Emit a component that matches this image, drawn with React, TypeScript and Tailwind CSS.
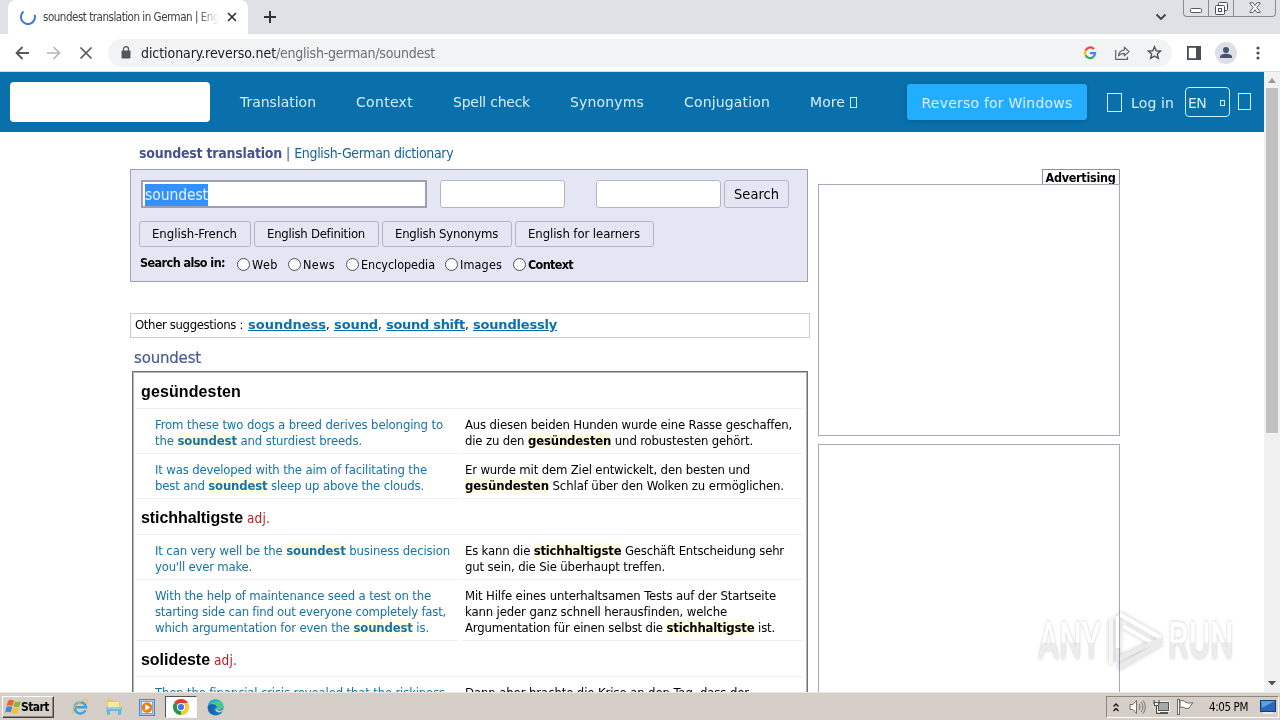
import { useLayoutEffect, useRef } from "react";
import type { ReactNode } from "react";

/* Spreads a single line of text over an exact width. */
function Fit({ w, className = "", children }: { w: number; className?: string; children: ReactNode }) {
  const ref = useRef<HTMLSpanElement>(null);
  useLayoutEffect(() => {
    const el = ref.current;
    if (!el) return;
    el.style.letterSpacing = "0px";
    const natural = el.getBoundingClientRect().width;
    const count = (el.textContent ?? "").length;
    el.style.letterSpacing = `${(w - natural) / count}px`;
  }, [w]);
  return (
    <span ref={ref} className={`inline-block shrink-0 whitespace-nowrap ${className}`}>
      {children}
    </span>
  );
}

function TabStrip() {
  return (
    <div className="flex h-[34px] bg-[#dee1e6] pl-2">
      <div className="mt-0 flex h-[34px] w-[240px] items-center rounded-t-lg bg-white pl-[12px]">
        <svg width="16" height="16" viewBox="0 0 16 16" fill="none" stroke="#3b78e0" strokeWidth="2">
          <path d="M3.500 2.600 A7 7 0 1 0 14.600 5.800" />
        </svg>
        <div className="ml-[7px] w-[176px] overflow-hidden text-[11.5px] leading-[16px] text-[#3c4043] [mask-image:linear-gradient(to_right,black_88%,transparent)]">
          <Fit w={176}>soundest translation in German | Eng</Fit>
        </div>
        <svg className="ml-[8px]" width="10" height="10" viewBox="0 0 10 10" stroke="#303438" strokeWidth="1.7">
          <path d="M1 1l8 8M9 1l-8 8" />
        </svg>
      </div>
      <svg className="mt-[10px] ml-[15px]" width="14" height="14" viewBox="0 0 14 14" stroke="#303438" strokeWidth="2">
        <path d="M7 1v12M1 7h12" />
      </svg>
      <div className="flex-1" />
      <svg className="mt-[13px] mr-[16px]" width="12" height="8" viewBox="0 0 12 8" fill="none" stroke="#3c4043" strokeWidth="1.8">
        <path d="M1.5 1.5L6 6l4.500-4.500" />
      </svg>
      <div className="mr-[4px] flex h-[17px] w-[93px] rounded-b-[4px] border border-t-0 border-[#868a94]">
        <div className="flex w-[25px] justify-center border-r border-[#868a94] pt-[8px]">
          <svg width="12" height="5" viewBox="0 0 12 5" fill="#fff" stroke="#555964">
            <rect x="0.500" y="0.500" width="11" height="4" rx="1" />
          </svg>
        </div>
        <div className="flex w-[25px] justify-center border-r border-[#868a94] pt-[2px]">
          <svg width="13" height="13" viewBox="0 0 13 13" fill="#f7f8fa" stroke="#4b4f5a">
            <rect x="3.500" y="0.500" width="9" height="8" rx="1" />
            <rect x="0.500" y="3.500" width="9" height="9" rx="1" />
            <rect x="3.500" y="6.500" width="3" height="3" />
          </svg>
        </div>
        <div className="flex flex-1 justify-center pt-[2px]">
          <svg width="12" height="12" viewBox="0 0 12 12">
            <path d="M1 .7h3l2 2.800L8 .7h3v1L7.800 5.500 11 9.500v1H8L6 7.800 4 10.500H1v-1l3.200-4L1 1.700z" fill="#f7f8fa" stroke="#4b4f5a" strokeWidth="0.900" />
          </svg>
        </div>
      </div>
    </div>
  );
}

function Toolbar() {
  return (
    <div className="flex h-[38px] items-center border-b border-[#d8daec] bg-white pl-[15px]">
      <svg width="14" height="14" viewBox="0 0 14 14" fill="none" stroke="#54585d" strokeWidth="1.800">
        <path d="M14 7H1.500M7.500 1L1.500 7l6 6" />
      </svg>
      <svg className="ml-[18px]" width="14" height="14" viewBox="0 0 14 14" fill="none" stroke="#b4b7ba" strokeWidth="1.600">
        <path d="M0 7h12.500M6.500 1l6 6-6 6" />
      </svg>
      <svg className="ml-[18px]" width="14" height="14" viewBox="0 0 14 14" stroke="#54585d" strokeWidth="1.700">
        <path d="M1.500 1.500l11 11M12.500 1.500l-11 11" />
      </svg>
      <div className="ml-[15px] flex h-[28px] w-[1064px] items-center rounded-full bg-[#f1f3f4] pl-[13px]">
        <svg width="10" height="13" viewBox="0 0 10 13">
          <rect x="0.500" y="4.500" width="9" height="8" rx="1" fill="#54585d" />
          <path d="M2.500 5V3.200a2.500 2.500 0 0 1 5 0V5" fill="none" stroke="#54585d" strokeWidth="1.300" />
        </svg>
        <div className="ml-[10px] flex text-[14px] leading-[18px]">
          <Fit w={135} className="text-[#202124]">dictionary.reverso.net</Fit>
          <Fit w={159} className="text-[#6b6f74]">/english-german/soundest</Fit>
        </div>
        <div className="flex-1" />
        <svg width="14" height="14" viewBox="0 0 14 14" fill="none" strokeWidth="2.200">
          <path d="M11 3A5 5 0 0 0 2.600 4.700" stroke="#ea4335" />
          <path d="M2.600 4.700a5 5 0 0 0 0 4.600" stroke="#fbbc05" />
          <path d="M2.600 9.300A5 5 0 0 0 10.500 10.700" stroke="#34a853" />
          <path d="M7 7.200h5a5 5 0 0 1-1.600 3.500" stroke="#4285f4" />
        </svg>
        <svg className="ml-[18px]" width="15" height="14" viewBox="0 0 15 14" fill="none" stroke="#5f6368" strokeWidth="1.200">
          <path d="M.700 4v9.300H12.500v-2.500" />
          <path d="M3.500 9.800C4 6 6 4.200 9.300 4.100V1.200L14 5.600l-4.700 4.200V7.300C6.800 7.200 5 8 3.500 9.800z" strokeLinejoin="round" />
        </svg>
        <svg className="mr-[10px] ml-[17px]" width="15" height="15" viewBox="0 0 16 16" fill="none" stroke="#4f5358" strokeWidth="1.500" strokeLinejoin="miter">
          <path d="M8 1.800l1.900 4.300 4.600.4-3.500 3.100 1.100 4.600L8 11.800l-4.100 2.400L5 9.600 1.500 6.500l4.600-.4z" />
        </svg>
      </div>
      <svg className="ml-[15px]" width="14" height="14" viewBox="0 0 14 14">
        <rect x="0.900" y="0.900" width="12.200" height="12.200" fill="none" stroke="#4a4e53" strokeWidth="1.800" />
        <path d="M9 0h5v14H9z" fill="#4a4e53" />
      </svg>
      <svg className="ml-[14px]" width="22" height="22" viewBox="0 0 22 22">
        <circle cx="11" cy="11" r="11" fill="#dcdfe4" />
        <circle cx="11" cy="8" r="3" fill="#4a5472" />
        <path d="M5 16v-1.200c0-2 3-3 6-3s6 1 6 3V16z" fill="#4a5472" />
      </svg>
      <svg className="ml-[19px]" width="4" height="14" viewBox="0 0 4 14" fill="#4a4e53">
        <circle cx="2" cy="2" r="1.600" />
        <circle cx="2" cy="7" r="1.600" />
        <circle cx="2" cy="12" r="1.600" />
      </svg>
    </div>
  );
}

const NAV: [string, number][] = [
  ["Translation", 76],
  ["Context", 57],
  ["Spell check", 77],
  ["Synonyms", 74],
  ["Conjugation", 86],
  ["More", 35],
];

function SiteHeader() {
  return (
    <header className="flex h-[60px] items-center bg-[#0970ac] pl-[10px] font-['DejaVu_Sans',sans-serif] text-[14px] leading-[20px] text-[#d6edf8]">
      <div className="h-[40px] w-[200px] rounded-[4px] bg-white" />
      <nav className="ml-[30px] flex gap-[40px]">
        {NAV.map(([label, w]) => (
          <Fit key={label} w={w}>{label}</Fit>
        ))}
      </nav>
      <div className="ml-[5px] h-[11px] w-[7px] border border-[#cfeafa]" />
      <div className="ml-[50px] flex h-[36px] w-[180px] items-center justify-center rounded-[3px] bg-[#22adff] pt-[2px] text-[#d8f1ff] shadow-[0_1px_4px_#075b8d]">
        <Fit w={151}>Reverso for Windows</Fit>
      </div>
      <div className="ml-[20px] h-[19px] w-[15px] border border-[#cdebf8]" />
      <Fit w={43} className="ml-[9px] pt-[2px]">Log in</Fit>
      <div className="ml-[11px] flex h-[30px] w-[45px] items-center justify-between rounded-[4px] border border-[#cdf1fb] pr-[4px] pl-[2px]">
        <Fit w={18} className="pt-[2px] text-[14px]">EN</Fit>
        <div className="mt-[2px] h-[6px] w-[5px] border border-[#cdf1fb]" />
      </div>
      <div className="mb-[2px] ml-[8px] h-[17px] w-[13px] border border-[#cdf1fb]" />
    </header>
  );
}

const QUICK: [string, string, number][] = [
  ["English-French", "w-[112px]", 85],
  ["English Definition", "w-[125px]", 98],
  ["English Synonyms", "w-[130px]", 103],
  ["English for learners", "w-[139px]", 112],
];

const SCOPES: [string, number, string][] = [
  ["Web", 26, "mr-[10px]"],
  ["News", 32, "mr-[11px]"],
  ["Encyclopedia", 74, "mr-[10px]"],
  ["Images", 42, "mr-[11px]"],
  ["Context", 45, "font-bold"],
];

function SearchPanel() {
  return (
    <section className="mt-[6px] h-[113px] w-[678px] border border-[#9fa2b3] bg-[#e4e6f3] pt-[10px] pl-[8px] text-black">
      <div className="flex h-[28px] pl-[2px]">
        <div className="w-[286px] border-2 border-[#9b9fb0] bg-white pt-px pl-[2px]">
          <span className="inline-block h-[22px] bg-[#3390ff] text-[15.5px] leading-[22px] text-[#e6f2ff]">
            <Fit w={63}>soundest</Fit>
          </span>
        </div>
        <div className="ml-[13px] w-[125px] rounded-[3px] border border-[#b3b6c4] bg-white" />
        <div className="ml-[31px] w-[125px] rounded-[3px] border border-[#b3b6c4] bg-white" />
        <div className="ml-[3px] flex w-[65px] items-center justify-center rounded-[3px] border border-[#b3b6c4] pt-[2px] text-[14.5px]">
          <Fit w={45}>Search</Fit>
        </div>
      </div>
      <div className="mt-[13px] flex h-[26px] gap-[3px] text-[13px]">
        {QUICK.map(([label, width, w]) => (
          <div key={label} className={`flex ${width} items-center justify-center rounded-[3px] border border-[#b3b6c4] pr-px`}>
            <Fit w={w}>{label}</Fit>
          </div>
        ))}
      </div>
      <div className="mt-[8px] flex h-[18px] items-center text-[12.5px] leading-[16px]">
        <Fit w={85} className="mb-[2px] ml-px font-bold">Search also in:</Fit>
        <div className="ml-[12px] flex items-center">
          {SCOPES.map(([label, w, cls]) => (
            <div key={label} className={`flex items-center ${cls}`}>
              <span className="mr-[2px] size-[13px] rounded-full border border-[#4f5057] bg-white" />
              <Fit w={w} className="pt-px">{label}</Fit>
            </div>
          ))}
        </div>
      </div>
    </section>
  );
}

function Hit({ children }: { children: ReactNode }) {
  return <b className="bg-[#fffde3] font-bold">{children}</b>;
}

type Line = [number, ReactNode];

function ResultHead({ word, w, adj = false }: { word: string; w: number; adj?: boolean }) {
  return (
    <div className="mx-[2px] flex h-[35px] items-center border-b border-[#f0f0f4] pt-[2px] pl-[5px] font-['Liberation_Sans',sans-serif] text-[16px] leading-[20px] text-black">
      <Fit w={w} className="font-bold">{word}</Fit>
      {adj && <Fit w={23} className="mb-px ml-[4px] font-['DejaVu_Sans_Condensed','DejaVu_Sans',sans-serif] text-[13.5px] text-[#b22028]">adj.</Fit>}
    </div>
  );
}

function Pair({ en, de, height }: { en: Line[]; de: Line[]; height: string }) {
  return (
    <div className={`mx-[2px] flex gap-[3px] text-[13px] leading-[16px] ${height}`}>
      <div className="w-[323px] border-b border-[#f0f0f4] pt-[8px] pl-[19px] text-[#1673a6]">
        {en.map(([w, content], i) => (
          <div key={i} className="h-[16px]"><Fit w={w}>{content}</Fit></div>
        ))}
      </div>
      <div className="flex-1 border-b border-[#f0f0f4] pt-[8px] pl-[3px] text-black">
        {de.map(([w, content], i) => (
          <div key={i} className="h-[16px]"><Fit w={w}>{content}</Fit></div>
        ))}
      </div>
    </div>
  );
}

function Results() {
  return (
    <section className="mt-[3px] ml-[2px] h-[400px] w-[676px] border border-[#6f7175] p-px pt-[2px] shadow-[inset_0_0_0_1px_#b4b5b8]">
      <ResultHead word="gesündesten" w={100} />
      <Pair
        height="h-[45px]"
        en={[
          [288, "From these two dogs a breed derives belonging to"],
          [207, <>the <Hit>soundest</Hit> and sturdiest breeds.</>],
        ]}
        de={[
          [327, "Aus diesen beiden Hunden wurde eine Rasse geschaffen,"],
          [288, <>die zu den <Hit>gesündesten</Hit> und robustesten gehört.</>],
        ]}
      />
      <Pair
        height="h-[45px]"
        en={[
          [272, "It was developed with the aim of facilitating the"],
          [269, <>best and <Hit>soundest</Hit> sleep up above the clouds.</>],
        ]}
        de={[
          [285, "Er wurde mit dem Ziel entwickelt, den besten und"],
          [319, <><Hit>gesündesten</Hit> Schlaf über den Wolken zu ermöglichen.</>],
        ]}
      />
      <div className="h-px" />
      <ResultHead word="stichhaltigste" w={102} adj />
      <Pair
        height="h-[45px]"
        en={[
          [295, <>It can very well be the <Hit>soundest</Hit> business decision</>],
          [97, "you'll ever make."],
        ]}
        de={[
          [319, <>Es kann die <Hit>stichhaltigste</Hit> Geschäft Entscheidung sehr</>],
          [200, "gut sein, die Sie überhaupt treffen."],
        ]}
      />
      <Pair
        height="h-[61px]"
        en={[
          [276, "With the help of maintenance seed a test on the"],
          [291, "starting side can find out everyone completely fast,"],
          [274, <>which argumentation for even the <Hit>soundest</Hit> is.</>],
        ]}
        de={[
          [311, "Mit Hilfe eines unterhaltsamen Tests auf der Startseite"],
          [262, "kann jeder ganz schnell herausfinden, welche"],
          [310, <>Argumentation für einen selbst die <Hit>stichhaltigste</Hit> ist.</>],
        ]}
      />
      <div className="h-px" />
      <ResultHead word="solideste" w={69} adj />
      <Pair
        height="h-[45px]"
        en={[[290, "Then the financial crisis revealed that the riskiness"]]}
        de={[[284, "Dann aber brachte die Krise an den Tag, dass der"]]}
      />
    </section>
  );
}

const SUGGESTIONS: [string, number][] = [
  ["soundness", 78],
  ["sound", 44],
  ["sound shift", 79],
  ["soundlessly", 84],
];

function DictionaryColumn() {
  return (
    <div className="w-[680px] pt-[11px]">
      <h1 className="flex h-[20px] items-center pl-[9px] text-[14px] leading-[20px] text-[#465292]">
        <Fit w={143} className="font-bold">soundest translation</Fit>
        <span className="mr-[4px] ml-[4px]">|</span>
        <Fit w={159} className="text-[#17629b]">English-German dictionary</Fit>
      </h1>
      <SearchPanel />
      <div className="mt-[31px] flex h-[25px] items-center border border-[#c9cbe2] pb-px pl-[4px] text-[13px] leading-[16px] text-black">
        <Fit w={108}>Other suggestions :</Fit>
        <span className="w-[5px]" />
        {SUGGESTIONS.map(([label, w], i) => (
          <span key={label} className="flex">
            <Fit w={w} className="font-['DejaVu_Sans',sans-serif] font-bold text-[#0970ac] underline">{label}</Fit>
            {i < 3 && <span className="w-[8px]">,</span>}
          </span>
        ))}
      </div>
      <h2 className="mt-[10px] h-[20px] pl-[4px] font-['DejaVu_Sans',sans-serif] text-[15px] leading-[20px] text-[#465c94]">
        <Fit w={67} className="[-webkit-text-stroke:0.2px_#465c94]">soundest</Fit>
      </h2>
      <Results />
    </div>
  );
}

function Advertising() {
  return (
    <aside className="ml-[8px] flex w-[302px] flex-col pt-[37px]">
      <div className="flex h-[15px] w-[78px] items-center justify-center self-end border border-b-0 border-[#8d8f9c] pt-[2px] pr-px text-[12.5px] leading-[14px] font-bold text-black">
        <Fit w={70}>Advertising</Fit>
      </div>
      <div className="h-[252px] shrink-0 border border-[#a7a9b9]" />
      <div className="mt-[8px] h-[252px] shrink-0 border border-[#a7a9b9]" />
    </aside>
  );
}

function ScrollBar() {
  return (
    <div className="flex w-[16px] shrink-0 flex-col items-center bg-[#f1f1f1]">
      <svg className="mt-[6px]" width="8" height="5" viewBox="0 0 8 5" fill="#9b9b9b"><path d="M0 5l4-5 4 5z" /></svg>
      <div className="mt-[5px] h-[345px] w-[12px] bg-[#c1c1c1]" />
      <div className="flex-1" />
      <svg className="mb-[6px]" width="8" height="5" viewBox="0 0 8 5" fill="#505050"><path d="M0 0l4 4.500L8 0z" /></svg>
    </div>
  );
}

function Watermark() {
  const word = "origin-left text-[50px] leading-[50px] font-medium font-['Roboto',sans-serif] bg-linear-to-b from-white from-52% to-[#ececec] to-54% bg-clip-text text-transparent [filter:drop-shadow(0_0_2px_#c8c8c8)]";
  return (
    <div className="pointer-events-none absolute top-[608px] left-[1038px] flex h-[66px] w-[198px] items-center mix-blend-multiply">
      <div className="w-[68px]"><span className={`block w-max scale-x-[0.64] ${word}`}>ANY</span></div>
      <svg className="shrink-0 overflow-visible [filter:drop-shadow(0_0_2px_#c4c4c4)]" width="60" height="66" viewBox="0 0 60 66" fill="none">
        <path d="M5 11v45" stroke="#f7f7f7" strokeWidth="4" />
        <path d="M12 8v32M13 6l42 24" stroke="#fff" strokeWidth="4.500" />
        <path d="M17 18l33 19" stroke="#fff" strokeWidth="4" />
        <path d="M12 42v9l43-20M12 60l43-25" stroke="#ebebeb" strokeWidth="4.500" />
      </svg>
      <div className="ml-[2px] w-[66px]"><span className={`block w-max scale-x-[0.66] ${word}`}>RUN</span></div>
    </div>
  );
}

function Flag() {
  return (
    <svg width="20" height="20" viewBox="0 0 20 20">
      <path d="M4 4c2-2 4-1.500 6-.3L8.500 9C6.500 8 4.500 8 2.500 9.300z" fill="#ed6229" />
      <path d="M11 4.200c2 1 4 1 6-.5l-1.600 5.500c-2 1.300-4 1.200-6 .2z" fill="#85b936" />
      <path d="M2.300 10.300c2-1.300 4-1.300 6-.2l-1.500 5.500C4.800 14.500 3 14.500 1 16z" fill="#4d83cf" />
      <path d="M9.200 10.500c2 1 4 1 6-.3l-1.600 5.500c-2 1.400-4 1.400-6 .4z" fill="#f5c332" />
    </svg>
  );
}

function Taskbar() {
  return (
    <footer className="flex h-[28px] items-center border-t border-[#e9e6df] bg-[#d5cfc7] pt-px font-['DejaVu_Sans_Condensed','DejaVu_Sans',sans-serif]">
      <div className="ml-[2px] flex h-[22px] w-[52px] items-center border border-t-white border-r-[#46433f] border-b-[#46433f] border-l-white pl-px text-[12px] font-bold text-black shadow-[inset_-1px_-1px_0_#8c8780]">
        <Flag />
        <Fit w={28} className="-ml-[3px]">Start</Fit>
      </div>
      <svg className="ml-[17px]" width="18" height="18" viewBox="0 0 18 18" fill="none">
        <path d="M14.500 12.300A5.700 5.700 0 1 1 15 9.300H5" stroke="#43a3df" strokeWidth="2.500" />
        <path d="M2 15.500C-.5 12 8 2 15 1.600c2.500 0 1.300 3 .2 4.600" stroke="#e8c65a" strokeWidth="1.200" />
      </svg>
      <svg className="ml-[16px]" width="18" height="18" viewBox="0 0 18 18">
        <path d="M2 2l5-1 1.500 2H15v8H2z" fill="#e6c962" />
        <path d="M3 4h11v7H3z" fill="#f8eaa6" />
        <path d="M1 9h16l-1 8h-3v-4H5v4H2z" fill="#72b6d8" />
        <path d="M2 10h14" stroke="#c5e8f6" />
      </svg>
      <svg className="ml-[16px]" width="16" height="17" viewBox="0 0 16 17">
        <rect x="0.500" y="0.500" width="15" height="16" fill="#a9cbea" stroke="#5784bb" />
        <rect x="2.500" y="2.500" width="11" height="12" fill="#f2f8fe" stroke="#79a9d8" />
        <circle cx="8" cy="8.500" r="5.300" fill="#ee7d16" />
        <path d="M6.300 5.300l5 3.200-5 3.200z" fill="#fff" />
      </svg>
      <div className="ml-[10px] flex h-[22px] w-[32px] items-center justify-center border border-t-[#55514b] border-r-[#f5f4f1] border-b-[#f5f4f1] border-l-[#55514b] bg-white">
        <svg width="16" height="16" viewBox="0 0 16 16">
          <path d="M8 8L1.070 4A8 8 0 0 1 14.930 4z" fill="#e33b2e" />
          <path d="M8 8l6.930-4A8 8 0 0 1 8 16z" fill="#fcc934" />
          <path d="M8 8v8A8 8 0 0 1 1.070 4z" fill="#279847" />
          <path d="M8 4h6.930A8 8 0 0 1 8 16l3.500-6z" fill="#fcc934" />
          <circle cx="8" cy="8" r="4" fill="#fff" />
          <circle cx="8" cy="8" r="3.100" fill="#3a7be8" />
        </svg>
      </div>
      <svg className="ml-[10px]" width="17" height="17" viewBox="0 0 17 17">
        <circle cx="8.500" cy="8.500" r="8" fill="#1577c8" />
        <path d="M1 7C2 2.500 5 .5 9 .5c4 0 7.500 3 7.500 6.500 0 2.500-2 4-4.500 4-2 0-2.700-.8-2.200-1.800C11 6 5 3.500 1 7z" fill="#49c98d" />
        <path d="M1 6.500C2 2.500 5 .5 8.500.5c2 0 4 1 5 2C9 1.500 5 3 1 6.500z" fill="#2ba6dc" />
        <path d="M1 7c3-3 7-2 8.500.5C6 7 4.500 12 9 14.500 4.500 15 1 12 1 7z" fill="#1b61af" />
        <path d="M9.600 8.500c-1.500 2.700 3 4.600 6.200 2.300l1.200.7-3.600 1.800C9 14 7 10.500 9.600 8.500z" fill="#d5cfc7" />
      </svg>
      <div className="flex-1" />
      <div className="mr-px flex h-[22px] w-[173px] items-center border border-t-[#8c8881] border-r-white border-b-white border-l-[#8c8881] pl-[6px]">
        <svg width="6" height="9" viewBox="0 0 6 9" fill="none" stroke="#151515" strokeWidth="1.400"><path d="M.500 3.500L3 1l2.500 2.500M.500 8L3 5.500 5.500 8" /></svg>
        <svg className="ml-[10px]" width="17" height="16" viewBox="0 0 17 16" fill="none" stroke="#6f6d69">
          <path d="M1 5.500h3l3.500-4v13L4 10.500H1z" fill="#fff" />
          <path d="M10 5c1.300 2 1.300 4 0 6M12 3c2.500 3 2.500 7 0 10M14 1.500c3 4 3 9 0 13" />
        </svg>
        <svg className="ml-[7px]" width="17" height="16" viewBox="0 0 17 16">
          <rect x="5.500" y="3.500" width="10" height="8" fill="#a7a8a8" stroke="#555" />
          <rect x="4.500" y="2.500" width="12" height="10" fill="none" stroke="#f5f5f5" />
          <path d="M7 14h8" stroke="#555" strokeWidth="2" />
          <path d="M1 1v4h5V1M3.500 5v9.500H7" fill="none" stroke="#44433f" />
          <rect x="1.500" y="3.500" width="4" height="3" fill="#fff" stroke="#555" />
        </svg>
        <svg className="ml-[7px]" width="17" height="16" viewBox="0 0 17 16">
          <rect x="0.500" y="0.500" width="2" height="15" fill="#fff" stroke="#6a6864" />
          <path d="M3 2c3-1 4 0 6 1.500 2 .7 4 .7 7 .2-2 1.500-2.500 3.500-4 5.500-2 .5-4 .3-5-.7C5.500 8 4 8 3 8.500z" fill="#fff" stroke="#6a6864" />
        </svg>
        <Fit w={39} className="ml-[15px] pt-px text-[11.5px] text-black">4:05 PM</Fit>
        <svg className="ml-[12px]" width="16" height="14" viewBox="0 0 16 14">
          <rect x="0.500" y="0.500" width="15" height="11" fill="#2967ba" stroke="#183c73" />
          <path d="M1 1h14L2 8z" fill="#5ba0e7" />
          <path d="M3 13h10" stroke="#eef2f6" strokeWidth="1.500" />
        </svg>
      </div>
    </footer>
  );
}

export default function App() {
  return (
    <div className="relative flex h-[720px] w-[1280px] flex-col overflow-hidden bg-white font-['DejaVu_Sans_Condensed','DejaVu_Sans',sans-serif]">
      <TabStrip />
      <Toolbar />
      <div className="flex h-[620px] overflow-hidden">
        <div className="flex-1 overflow-hidden">
          <SiteHeader />
          <main className="flex h-[560px] overflow-hidden pl-[130px]">
            <DictionaryColumn />
            <Advertising />
          </main>
        </div>
        <ScrollBar />
      </div>
      <Taskbar />
      <Watermark />
    </div>
  );
}
